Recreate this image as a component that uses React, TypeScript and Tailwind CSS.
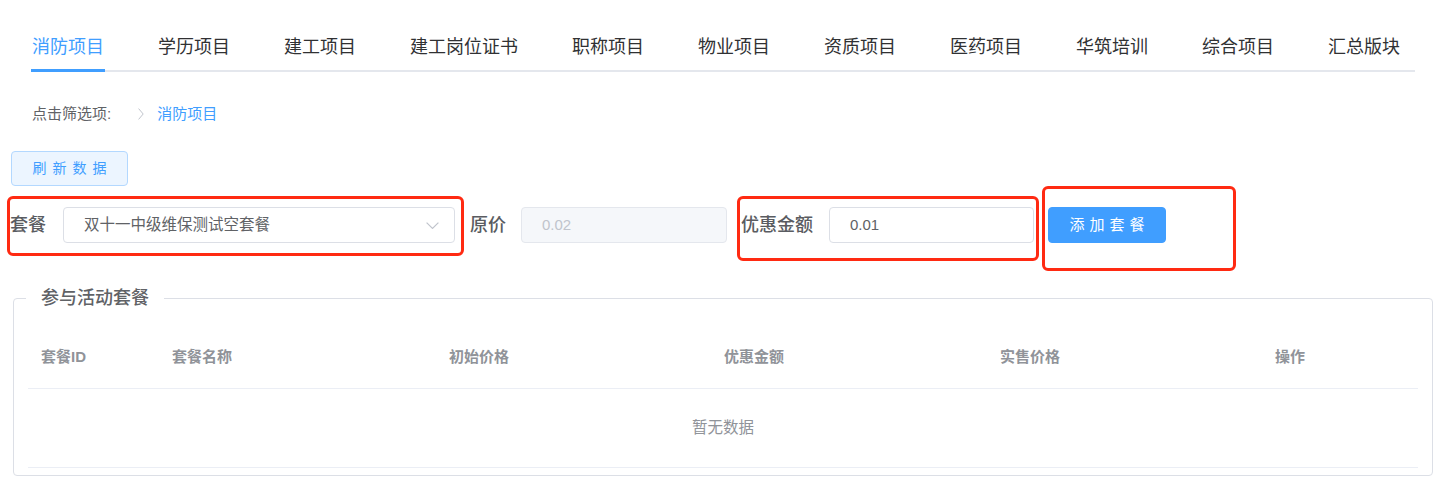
import clsx from "clsx";

const tabs = [
  "消防项目",
  "学历项目",
  "建工项目",
  "建工岗位证书",
  "职称项目",
  "物业项目",
  "资质项目",
  "医药项目",
  "华筑培训",
  "综合项目",
  "汇总版块",
];

const columns = ["套餐ID", "套餐名称", "初始价格", "优惠金额", "实售价格", "操作"];

function Chevron() {
  return (
    <svg width="13" height="7" viewBox="0 0 13 7" fill="none">
      <polyline points="0.6,0.6 6.5,6.4 12.4,0.6" stroke="#c0c4cc" strokeWidth="1.2" />
    </svg>
  );
}

export default function App() {
  return (
    <div
      className="relative w-[1449px] h-[503px] bg-white overflow-hidden"
      style={{ fontFamily: '"Liberation Sans", "Noto Sans CJK SC", sans-serif' }}
    >
      {/* tabs */}
      <div className="pt-[27px] pl-[31px]">
        <div className="w-[1384px] border-b-2 border-[#e4e7ed]">
          <div className="flex h-[43px] gap-[54px] pl-px">
            {tabs.map((t, i) => (
              <div
                key={t}
                className={clsx(
                  "relative text-[18px] leading-[40px] whitespace-nowrap",
                  i === 0 ? "text-[#409eff]" : "text-[#303133]"
                )}
              >
                {t}
                {i === 0 && (
                  <div className="absolute -left-px -right-px -bottom-[2px] h-[3px] bg-[#409eff]" />
                )}
              </div>
            ))}
          </div>
        </div>
      </div>

      {/* breadcrumb */}
      <div className="ml-[32px] mt-[32px] h-[20px] flex items-center text-[15px] leading-[20px]">
        <span className="text-[#606266]">点击筛选项:</span>
        <svg className="ml-[27px]" width="6" height="12" viewBox="0 0 6 12" fill="none">
          <polyline points="0.6,0.6 5.2,6 0.6,11.4" stroke="#c0c4cc" strokeWidth="1" />
        </svg>
        <span className="ml-[13px] text-[#409eff]">消防项目</span>
      </div>

      {/* refresh */}
      <button className="ml-[11px] mt-[27px] flex h-[35px] w-[117px] items-center justify-center rounded-[4px] border border-[#b3d8ff] bg-[#ecf5ff] text-[14px] text-[#409eff]">
        <span className="tracking-[6px] mr-[-6px]">刷新数据</span>
      </button>

      {/* form row */}
      <div className="mt-[21px] flex h-[36px] items-center pl-[10px]">
        <span className="text-[18px] font-medium text-[#5a5c61] whitespace-nowrap">套餐</span>
        <div className="ml-[17px] flex h-[36px] w-[392px] items-center justify-between rounded-[4px] border border-[#dcdfe6] pl-[20px] pr-[15px] text-[15.5px] text-[#606266]">
          <span>双十一中级维保测试空套餐</span>
          <Chevron />
        </div>
        <span className="ml-[15px] text-[18px] font-medium text-[#5a5c61] whitespace-nowrap">原价</span>
        <div className="ml-[15px] flex h-[36px] w-[206px] items-center rounded-[4px] border border-[#e4e7ed] bg-[#f5f7fa] pl-[20px] text-[15px] text-[#c0c4cc]">
          0.02
        </div>
        <span className="ml-[14px] text-[18px] font-medium text-[#5a5c61] whitespace-nowrap">优惠金额</span>
        <div className="ml-[16px] flex h-[36px] w-[205px] items-center rounded-[4px] border border-[#dcdfe6] pl-[20px] text-[15px] text-[#606266]">
          0.01
        </div>
        <button className="ml-[14px] flex h-[36px] w-[118px] items-center justify-center rounded-[4px] border border-[#409eff] bg-[#409eff] text-[15px] text-white">
          <span className="tracking-[5px] mr-[-5px]">添加套餐</span>
        </button>
      </div>

      {/* activity packages */}
      <fieldset className="ml-[13px] mt-[44px] w-[1420px] rounded-[4px] border border-[#dcdfe6] px-[14px] pb-[7px]">
        <legend className="ml-[-2px] px-[15px] text-[18px] leading-[22px] font-medium text-[#606266]">
          参与活动套餐
        </legend>
        <div className="pt-[18px]">
          <div className="grid h-[62px] grid-cols-[131px_277px_275px_276px_275px_1fr] items-center border-b border-[#ebeef5] text-[15px] font-semibold text-[#909399]">
            {columns.map((c) => (
              <div key={c} className="pl-[13px]">
                {c}
              </div>
            ))}
          </div>
          <div className="flex h-[79px] items-center justify-center border-b border-[#ebeef5] text-[15.5px] text-[#909399]">
            暂无数据
          </div>
        </div>
      </fieldset>

      {/* annotation boxes */}
      <div className="absolute left-[7px] top-[196px] h-[60px] w-[457px] rounded-[6px] border-[3px] border-[#ff2a12]" />
      <div className="absolute left-[737px] top-[196px] h-[65px] w-[302px] rounded-[6px] border-[3px] border-[#ff2a12]" />
      <div className="absolute left-[1042px] top-[186px] h-[85px] w-[194px] rounded-[6px] border-[3px] border-[#ff2a12]" />
    </div>
  );
}
